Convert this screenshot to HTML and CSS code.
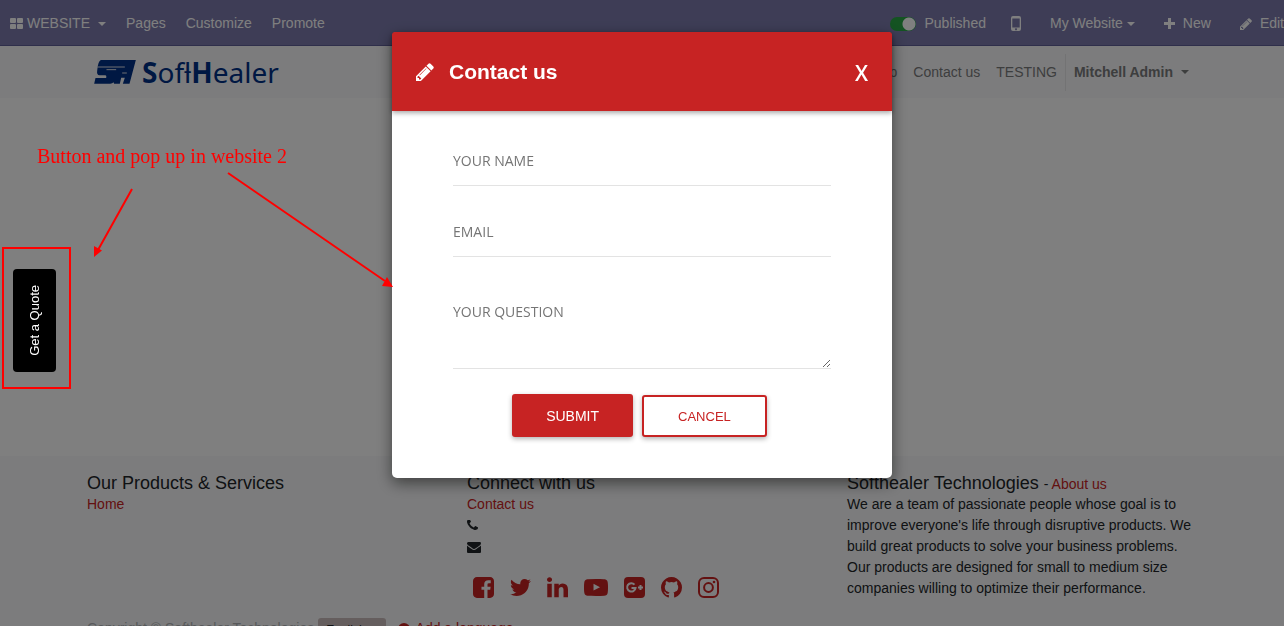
FILE: index.html
```
<!DOCTYPE html>
<html lang="en">
<head>
<meta charset="utf-8">
<title>Contact us</title>
<link rel="stylesheet" href="styles.css">
</head>
<body>
<svg class="defs" aria-hidden="true">
  <symbol id="pencil" viewBox="128 128 1536 1536"><path d="M491 1536l91-91-235-235-91 91v107h128v128h107zm523-928q0-22-22-22-10 0-17 7l-542 542q-7 7-7 17 0 22 22 22 10 0 17-7l542-542q7-7 7-17zm-54-192l416 416-832 832h-416v-416zm683 96q0 53-37 90l-166 166-416-416 166-165q36-38 90-38 53 0 91 38l235 234q37 39 37 91z"/></symbol>
</svg>

<div class="page">
  <nav class="topbar">
    <ul class="menu">
      <li><a href="#"><svg class="icon-grid" viewBox="0 0 13 11"><path d="M1 0h4q1 0 1 1v3q0 1-1 1H1Q0 5 0 4V1q0-1 1-1zM8 0h4q1 0 1 1v3q0 1-1 1H8Q7 5 7 4V1q0-1 1-1zM1 6h4q1 0 1 1v3q0 1-1 1H1q-1 0-1-1V7q0-1 1-1zM8 6h4q1 0 1 1v3q0 1-1 1H8q-1 0-1-1V7q0-1 1-1z"/></svg>WEBSITE<span class="caret wide"></span></a></li>
      <li><a href="#">Pages</a></li>
      <li><a href="#">Customize</a></li>
      <li><a href="#">Promote</a></li>
    </ul>
    <ul class="menu tools">
      <li><label class="publish"><input type="checkbox" class="switch" checked>Published</label></li>
      <li><a href="#" aria-label="Mobile preview"><svg class="icon-phone" viewBox="0 0 10 15"><path fill-rule="evenodd" d="M2 0h6q2 0 2 2v11q0 2-2 2H2q-2 0-2-2V2Q0 0 2 0zM1.300 2.500v9h7.400v-9zM5 12.200a1 1 0 1 0 .01 0z"/></svg></a></li>
      <li><a href="#">My Website<span class="caret"></span></a></li>
      <li><a href="#"><svg class="icon-plus" viewBox="0 0 11 11"><path d="M4 0h3v4h4v3H7v4H4V7H0V4h4z"/></svg>New</a></li>
      <li><a href="#"><svg class="icon-edit"><use href="#pencil"/></svg>Edit</a></li>
    </ul>
  </nav>

  <header class="site-header">
    <div class="container header-row">
      <a class="logo" href="#">
        <svg class="logo-mark" viewBox="0 0 125 72"><path d="M20 0H125L106 71H86L92 53H81L77 71H60L58 67Q55 71 48 71H0L4 54H36Q38 47 34 46H16Q7 45 9 32Q11 4 20 0z"/><path class="logo-gap" d="M9 21H92M37 29H66M84 39H98"/></svg>
        <span class="logo-text"><b>S</b>ofƚ<b>H</b>ealer</span>
      </a>
      <ul class="site-nav">
        <li><a href="#">Shop</a></li>
        <li><a href="#">Contact us</a></li>
        <li><a href="#">TESTING</a></li>
        <li class="user"><a href="#">Mitchell Admin<span class="caret"></span></a></li>
      </ul>
    </div>
  </header>

  <main class="content"></main>

  <footer class="footer">
    <div class="container columns">
      <section>
        <h2>Our Products &amp; Services</h2>
        <a href="#">Home</a>
      </section>
      <section>
        <h2>Connect with us</h2>
        <a href="#">Contact us</a>
        <div class="contact-line"><svg class="icon-call" viewBox="192 256 1408 1408"><path d="M1600 1240q0 27-10 70.500t-21 68.500q-21 50-122 106-94 51-186 51-27 0-52.500-3.500t-57.500-12.500-47.500-14.500-55.500-20.500-49-18q-98-35-175-83-128-79-264.500-215.500t-215.500-264.500q-48-77-83-175-3-9-18-49t-20.500-55.500-14.500-47.500-12.500-57.500-3.500-52.500q0-92 51-186 56-101 106-122 25-11 68.500-21t70.500-10q14 0 21 3 18 6 53 76 11 19 30 54t35 63.500 31 53.500q3 4 17.500 25t21.500 35.500 7 28.500q0 20-28.500 50t-62 55-62 53-28.500 46q0 9 5 22.500t8.500 20.500 14 24 11.500 19q76 137 174 235t235 174q2 1 19 11.500t24 14 20.500 8.500 22.500 5q18 0 46-28.500t53-62 55-62 50-28.500q14 0 28.500 7t35.500 21.500 25 17.500q25 15 53.500 31t63.500 35 54 30q70 35 76 53 3 7 3 21z"/></svg></div>
        <div class="contact-line"><svg class="icon-mail" viewBox="0 0 1792 1792"><path d="M1792 710v794q0 66-47 113t-113 47h-1472q-66 0-113-47t-47-113v-794q44 49 101 87 362 246 497 345 57 42 92.500 65.500t94.500 48 110 24.500h2q51 0 110-24.500t94.500-48 92.500-65.500q170-123 498-345 57-39 100-87zm0-294q0 79-49 151t-122 123q-376 261-468 325-10 7-42.500 30.500t-54 38-52 32.500-57.500 27-50 9h-2q-23 0-50-9t-57.500-27-52-32.500-54-38-42.500-30.500q-91-64-262-182.500t-205-142.500q-62-42-117-115.500t-55-136.500q0-78 41.500-130t118.500-52h1472q65 0 112.500 47t47.500 113z"/></svg></div>
        <div class="social">
          <a href="#" aria-label="Facebook"><svg viewBox="128 128 1536 1536"><path d="M1376 128q119 0 203.500 84.500t84.500 203.500v960q0 119-84.500 203.500t-203.500 84.500h-188v-595h199l30-232h-229v-148q0-56 23.500-84t91.500-28l122-1v-207q-63-9-178-9-136 0-217.500 80t-81.500 226v171h-200v232h200v595h-532q-119 0-203.500-84.500t-84.500-203.500v-960q0-119 84.500-203.500t203.500-84.500h960z"/></svg></a>
          <a href="#" aria-label="Twitter"><svg viewBox="108 128 1576 1536"><path d="M1684 408q-67 98-162 167 1 14 1 42 0 130-38 259.500t-115.500 248.500-184.500 210.500-258 146-323 54.500q-271 0-496-145 35 4 78 4 225 0 401-138-105-2-188-64.500t-114-159.500q33 5 61 5 43 0 85-11-112-23-185.500-111.500t-73.500-205.500v-4q68 38 146 41-66-44-105-115t-39-154q0-88 44-163 121 149 294.500 238.500t371.500 99.500q-8-38-8-74 0-134 94.500-228.500t228.500-94.500q140 0 236 102 109-21 205-78-37 115-142 178 93-10 186-50z"/></svg></a>
          <a href="#" aria-label="LinkedIn"><svg viewBox="128 128 1536 1536"><path d="M477 625v991h-330v-991h330zm21-306q1 73-50.500 122t-135.500 49h-2q-82 0-132-49t-50-122q0-74 51.500-122.500t134.500-48.500 133 48.500 51 122.500zm1166 729v568h-329v-530q0-105-40.500-164.500t-126.500-59.500q-63 0-105.500 34.500t-63.500 85.500q-11 30-11 81v553h-329q2-399 2-647t-1-296l-1-48h329v144h-2q20-32 41-56t56.500-52 87-43.500 114.500-15.500q171 0 275 113.500t104 332.500z"/></svg></a>
          <a href="#" aria-label="YouTube"><svg class="wide-icon" viewBox="0 128 1792 1536"><path d="M711 1128l484-250-484-253v503zm185-862q168 0 324.500 4.500t229.500 9.500l73 4q1 0 17 1.500t23 3 23.500 4.500 28.500 8 28 13 31 19.500 29 26.500q6 6 15.500 18.500t29 58.500 26.500 101q8 64 12.500 136.500t5.500 113.500v176q1 145-18 290-7 55-25 99.500t-32 61.500l-14 17q-14 15-29 26.500t-31 19-28 12.500-28.500 8-24 4.500-23 3-16.500 1.500q-251 19-627 19-207-2-359.500-6.500t-200.500-7.500l-49-4-36-4q-36-5-54.500-10t-51-21-56.500-41q-6-6-15.500-18.500t-29-58.500-26.500-101q-8-64-12.500-136.500t-5.500-113.500v-176q-1-145 18-290 7-55 25-99.500t32-61.500l14-17q14-15 29-26.500t31-19.500 28-13 28.500-8 23.500-4.500 23-3 17-1.500q251-18 627-18z"/></svg></a>
          <a href="#" aria-label="Google Plus"><svg viewBox="0 0 21 21"><rect width="21" height="21" rx="4"/><path class="cutout" d="M10.500 7.600A4.200 4.200 0 1 0 11.500 11H7.500M16.500 8v5M14 10.500h5"/></svg></a>
          <a href="#" aria-label="GitHub"><svg viewBox="128 128 1536 1536"><path d="M896 128q209 0 385.500 103t279.500 279.500 103 385.500q0 251-146.500 451.500t-378.500 277.500q-27 5-40-7t-13-30q0-3 .5-76.500t.5-134.500q0-97-52-142 57-6 102.500-18t94-39 81-66.500 53-105 20.500-150.500q0-119-79-206 37-91-8-204-28-9-81 11t-92 44l-38 24q-93-26-192-26t-192 26q-16-11-42.500-27t-83.500-38.500-85-13.500q-45 113-8 204-79 87-79 206 0 85 20.500 150t52.500 105 80.500 67 94 39 102.500 18q-39 36-49 103-21 10-45 15t-57 5-65.500-21.500-55.500-62.500q-19-32-48.500-52t-49.500-24l-20-3q-21 0-29 4.500t-5 11.500 9 14 13 12l7 5q22 10 43.500 38t31.500 51l10 23q13 38 44 61.500t67 30 69.500 7 55.500-3.500l23-4q0 38 .5 88.500t.5 54.500q0 18-13 30t-40 7q-232-77-378.500-277.500t-146.500-451.500q0-209 103-385.500t279.500-279.500 385.500-103z"/></svg></a>
          <a href="#" aria-label="Instagram"><svg viewBox="0 0 21 21"><g class="outline"><rect x="1" y="1" width="19" height="19" rx="5"/><circle cx="10.500" cy="10.500" r="4.400"/></g><circle cx="16" cy="5" r="1.300"/></svg></a>
        </div>
      </section>
      <section>
        <h2>Softhealer Technologies <small>- <a href="#">About us</a></small></h2>
        <p>We are a team of passionate people whose goal is to improve everyone's life through disruptive products. We build great products to solve your business problems.</p>
        <p>Our products are designed for small to medium size companies willing to optimize their performance.</p>
      </section>
    </div>
    <div class="container legal">
      <span class="copyright">Copyright © Softhealer Technologies</span>
      <button type="button" class="language">English<span class="caret"></span></button>
      <a class="add-language" href="#"><svg viewBox="0 0 12 12"><circle cx="6" cy="6" r="6"/><path class="cutout" d="M6 3v6M3 6h6"/></svg>Add a language...</a>
    </div>
  </footer>
</div>

<div class="backdrop">
  <form class="modal" role="dialog" aria-labelledby="modal-title">
    <div class="modal-header">
      <svg class="icon-title"><use href="#pencil"/></svg>
      <h1 id="modal-title">Contact us</h1>
      <button type="button" class="close" aria-label="Close">X</button>
    </div>
    <div class="modal-body">
      <input class="field" type="text" placeholder="YOUR NAME" aria-label="Your name">
      <input class="field" type="email" placeholder="EMAIL" aria-label="Email">
      <textarea class="field question" placeholder="YOUR QUESTION" aria-label="Your question"></textarea>
      <div class="actions">
        <button type="submit" class="btn submit">SUBMIT</button>
        <button type="button" class="btn cancel">CANCEL</button>
      </div>
    </div>
  </form>
</div>

<button type="button" class="quote"><span>Get a Quote</span></button>

<svg class="annotations" viewBox="0 0 400 400">
  <rect x="3" y="248" width="67" height="140"/>
  <path class="line" d="M132 189L98 250M228 173L385 281"/>
  <path class="head" d="M94 257L94 246L102 250.500zM393 287L382 286L387 277z"/>
</svg>
<p class="note">Button and pop up in website 2</p>
</body>
</html>
```
FILE: styles.css
```
* { box-sizing: border-box; }

body {
  margin: 0;
  height: 100vh;
  overflow: hidden;
  background: #fff;
  color: #212529;
  font: 14px/21px "Liberation Sans", Arial, sans-serif;
}

h1, h2, p, ul { margin: 0; padding: 0; }
ul { list-style: none; }
a { color: inherit; text-decoration: none; }
svg { flex: none; fill: currentColor; }
.defs { display: none; }

.container {
  max-width: 1140px;
  margin: 0 auto;
  padding: 0 15px;
}

.caret {
  margin-left: 4px;
  border: 4px solid transparent;
  border-top-color: currentColor;
  border-bottom: 0;
}
.caret.wide { margin-left: 8px; }

/* Top bar */
.topbar {
  display: flex;
  justify-content: space-between;
  height: 46px;
  padding: 2px 0 0 10px;
  background: #7c7bad;
  border-bottom: 1px solid #5f5e97;
  color: #fff;
}
.menu { display: flex; align-items: center; gap: 20px; }
.menu a, .publish { display: flex; align-items: center; white-space: nowrap; }
.tools { gap: 29px; }
.icon-grid { width: 13px; height: 11px; margin-right: 4px; }
.icon-phone { width: 10px; height: 15px; margin-left: -4px; }
.icon-plus { width: 11px; height: 11px; margin-right: 8px; }
.icon-edit { width: 12px; height: 12px; margin-right: 8px; }
.switch {
  appearance: none;
  width: 26px;
  height: 14px;
  margin: 0 8px 0 0;
  border-radius: 7px;
  background: radial-gradient(circle at 19px 7px, #fff 6px, transparent 7px), #28a745;
}

/* Site header */
.site-header { background: #f8f9fa; }
.header-row { display: flex; justify-content: space-between; height: 52px; }
.logo { display: flex; align-items: center; gap: 6px; padding-left: 7px; color: #003087; }
.logo-mark { width: 42px; height: 24px; }
.logo-gap { fill: none; stroke: #dcdfe6; stroke-width: 3; }
.logo-text { font: 28px/40px "Noto Sans", "Open Sans", sans-serif; }
.site-nav { display: flex; align-items: center; color: #7b7c7d; }
.site-nav a { display: flex; align-items: center; padding: 8px; }
.site-nav .caret { margin-left: 8px; }
.user { border-left: 1px solid #e6e7e8; font-weight: bold; }

.content { height: 358px; }

/* Footer */
.footer { padding-top: 17px; background: #f8f9fa; }
.footer a { color: #c72323; }
.columns { display: grid; grid-template-columns: repeat(3, 1fr); gap: 30px; }
.footer h2 { font-size: 18px; font-weight: normal; line-height: 21px; white-space: nowrap; }
.footer small { font-size: 14px; line-height: 14px; }
.contact-line { display: flex; align-items: center; height: 21px; }
.icon-call { width: 11px; height: 11px; }
.icon-mail { width: 14px; height: 14px; }
.social { display: flex; gap: 16px; padding: 20px 6px; }
.social svg { display: block; width: 21px; height: 21px; }
.social .wide-icon { width: 24px; }
.cutout { fill: none; stroke: #f8f9fa; stroke-width: 2; }
.outline { fill: none; stroke: currentColor; stroke-width: 2; }
.legal { display: flex; align-items: flex-start; gap: 12px; }
.copyright { margin-right: -8px; color: #b0b3b6; }
.language {
  padding: 3px 8px;
  border: 0;
  border-radius: 3px;
  background: #cbbcbc;
  color: #212529;
  font: 12px/18px "Liberation Sans", Arial, sans-serif;
}
.language .caret { display: inline-block; }
.add-language { display: flex; align-items: center; gap: 6px; }
.add-language svg { width: 12px; height: 12px; }

/* Modal */
.backdrop {
  position: fixed;
  inset: 0;
  padding: 32px 16px;
  background: rgba(0, 0, 0, .5);
}
.modal {
  max-width: 500px;
  margin: 0 auto;
  border-radius: 5px;
  background: #fff;
  box-shadow: 0 5px 15px rgba(0, 0, 0, .5);
}
.modal-header {
  display: flex;
  align-items: center;
  height: 79px;
  padding: 0 24px;
  border-radius: 3px 3px 0 0;
  background: #c72323;
  box-shadow: 0 2px 5px rgba(0, 0, 0, .35);
  color: #fff;
}
.icon-title { width: 18px; height: 18px; margin-right: 15px; }
.modal-header h1 { font-size: 21px; line-height: 32px; }
.close {
  margin-left: auto;
  padding: 2px 0 0;
  border: 0;
  background: none;
  color: #fff;
  font: 600 21px/32px "Open Sans", sans-serif;
}
.modal-body { padding: 26px 61px 41px; }
.field {
  display: block;
  width: 100%;
  height: 49px;
  margin-bottom: 22px;
  padding: 0 0 2px;
  border: 0;
  border-bottom: 1px solid #e3e3e3;
  background: none;
  font: 14px/21px "Open Sans", "Noto Sans", sans-serif;
}
.field::placeholder { color: #757575; opacity: 1; }
.question { height: 90px; margin-bottom: 25px; padding-top: 22px; }
.actions { display: flex; justify-content: center; align-items: flex-end; gap: 9px; padding-right: 5px; }
.btn {
  border: 0;
  border-radius: 3px;
  background: #c72323;
  box-shadow: 0 2px 5px rgba(0, 0, 0, .3);
  color: #fff;
  font: 14px/21px "Liberation Sans", Arial, sans-serif;
}
.submit { padding: 12px 34px 10px; }
.cancel {
  padding: 10px 34px 9px;
  border: 2px solid #c72323;
  background: #fff;
  color: #c72323;
  font-size: 13px;
  line-height: 19px;
}

/* Floating button and callouts lie over the page */
.quote {
  position: fixed;
  left: 13px;
  top: 269px;
  padding: 16px 14px;
  border: 0;
  border-radius: 4px;
  background: #000;
  color: #fff;
  font: 13px/15px "Liberation Sans", Arial, sans-serif;
}
.quote span { display: block; writing-mode: vertical-rl; transform: rotate(180deg); }
.annotations { position: absolute; left: 0; top: 0; width: 400px; height: 400px; pointer-events: none; color: #f00; }
.annotations rect, .annotations .line { fill: none; stroke: #f00; stroke-width: 2; }
.note {
  position: absolute;
  left: 37px;
  top: 144px;
  color: #f00;
  font: 20px/24px "Liberation Serif", "Times New Roman", serif;
}
```
